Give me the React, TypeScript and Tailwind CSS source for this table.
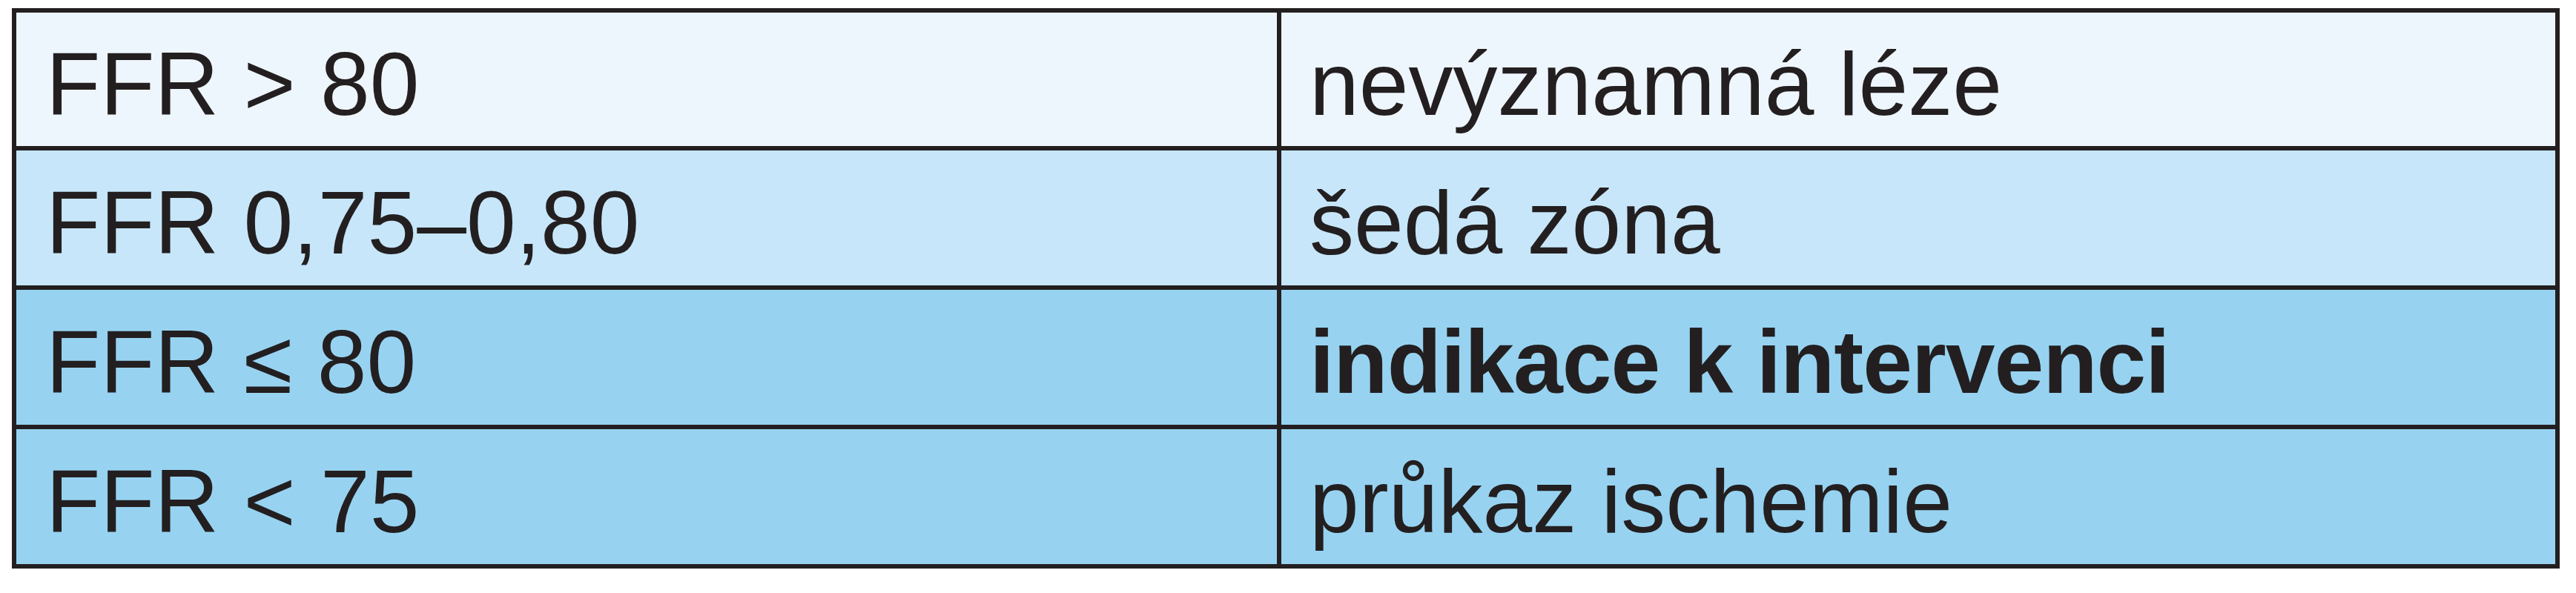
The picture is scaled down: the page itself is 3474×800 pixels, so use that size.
import React from "react";

interface Row {
  value: string;
  meaning: string;
  bg: string;
  bold?: boolean;
}

const rows: Row[] = [
  { value: "FFR > 80", meaning: "nevýznamná léze", bg: "bg-[#eef6fd]" },
  { value: "FFR 0,75–0,80", meaning: "šedá zóna", bg: "bg-[#c7e6f9]" },
  { value: "FFR ≤ 80", meaning: "indikace k intervenci", bg: "bg-[#97d3f1]", bold: true },
  { value: "FFR < 75", meaning: "průkaz ischemie", bg: "bg-[#97d3f1]" },
];

const App: React.FC = () => {
  return (
    <div className="w-[3474px] h-[800px] bg-white pl-[16px] pt-[11px] font-['Liberation_Sans',Arial,sans-serif] text-[#231f20]">
      <div className="w-[3436px] border-[6px] border-[#231f20] flex flex-col">
        {rows.map((row, i) => (
          <div
            key={row.value}
            className={`grid grid-cols-[1706px_1fr] ${row.bg} ${
              i > 0 ? "h-[188px] border-t-[6px] border-[#231f20]" : "h-[180px]"
            }`}
          >
            <div className="border-r-[6px] border-[#231f20] flex items-center pl-[40px] pt-[12px] text-[120px] leading-none">
              {row.value}
            </div>
            <div
              className={`flex items-center pl-[38px] pt-[12px] text-[120px] leading-none ${
                row.bold ? "font-bold tracking-[-1px]" : ""
              }`}
            >
              {row.meaning}
            </div>
          </div>
        ))}
      </div>
    </div>
  );
};

export default App;
